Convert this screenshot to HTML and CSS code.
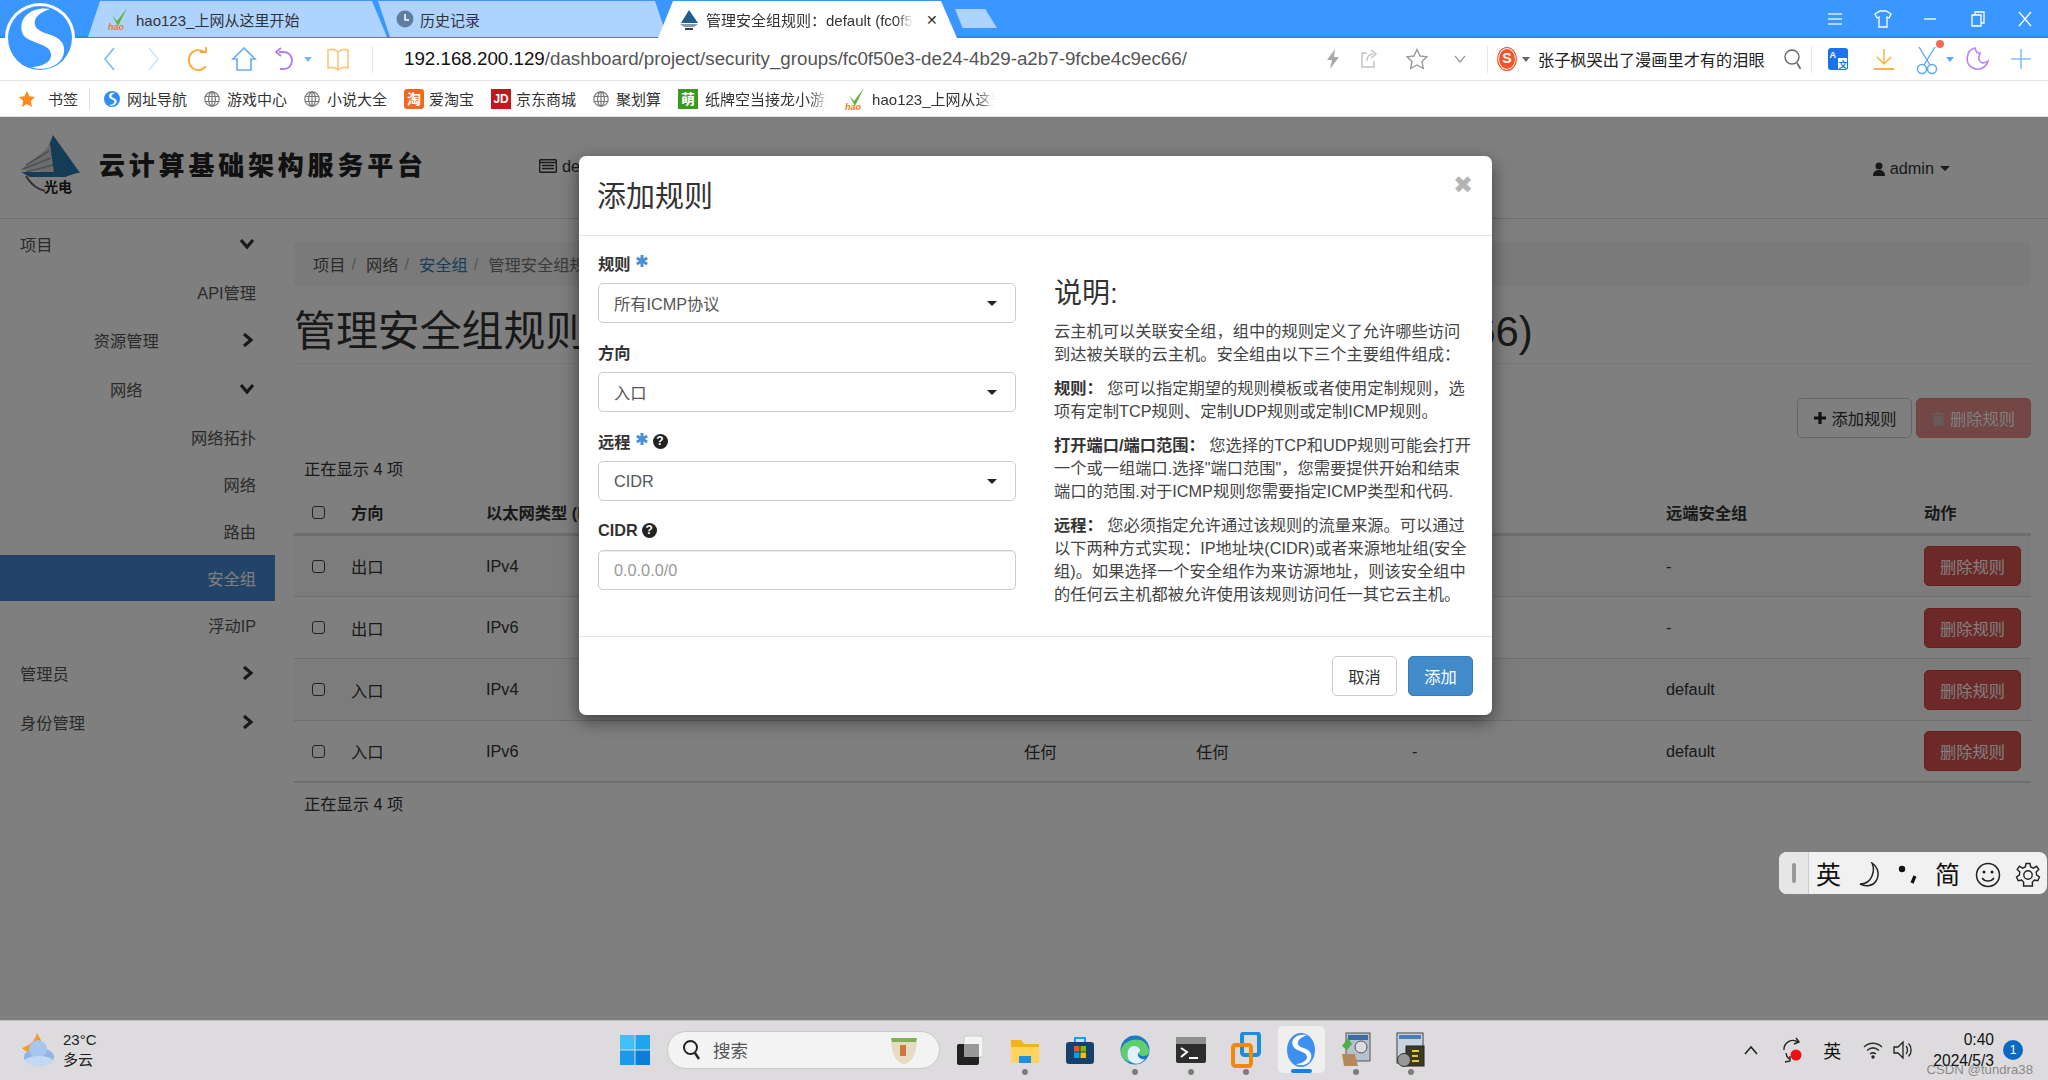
FILE: index.html
```html
<!DOCTYPE html>
<html lang="zh-CN">
<head>
<meta charset="utf-8">
<title>管理安全组规则</title>
<link rel="stylesheet" href="styles.css">
</head>
<body>
<svg class="brand" width="72" height="72" viewBox="0 0 72 72" aria-hidden="true">
  <circle cx="36" cy="36" r="35" fill="#fff"/>
  <circle cx="36" cy="36" r="32" fill="#3a96ff"/>
  <path d="M46 7 C30 4 14 14 18 30 C21 42 46 40 47 52 C48 60 38 65 27 65 C42 71 62 62 60 46 C58 30 34 34 31 23 C29 15 37 10 46 7 Z" fill="#fff"/>
</svg>

<header class="tabbar">
  <div class="tab tab-first">
    <svg class="tab-ic" width="22" height="24" viewBox="0 0 22 24"><path d="M4 8 L9 14 L19 1 L10 19 Z" fill="#5fb53a"/><text x="0" y="23" class="hao">hao</text></svg>
    <span class="tab-t">hao123_上网从这里开始</span>
  </div>
  <div class="tab tab-mid">
    <svg class="tab-ic" width="18" height="18" viewBox="0 0 18 18"><circle cx="9" cy="9" r="8.5" fill="#5f7d9f"/><path d="M9 4 V10 H13" stroke="#fff" stroke-width="1.5" fill="none"/></svg>
    <span class="tab-t">历史记录</span>
  </div>
  <div class="tab tab-active">
    <svg class="tab-ic" width="22" height="22" viewBox="0 0 22 22"><path d="M11 1 L20 14 H3 Z" fill="#1f5f8f"/><path d="M2 15 H20 L16 18 H6 Z" fill="#8a9aaa"/><path d="M7 20 H15" stroke="#345" stroke-width="2"/></svg>
    <span class="tab-t tab-fade">管理安全组规则：default (fc0f50e3-de24-4b29</span>
    <span class="tab-x">✕</span>
  </div>
  <div class="tab-new"></div>
  <div class="winctl">
    <span class="wc"><svg width="16" height="14" viewBox="0 0 16 14"><path d="M1 2 H15 M1 7 H15 M1 12 H15" stroke="#dcecff" stroke-width="1.4"/></svg></span>
    <span class="wc"><svg width="18" height="18" viewBox="0 0 18 18"><path d="M6 1 H12 L17 4 L15 8 L13 7 V17 H5 V7 L3 8 L1 4 Z" fill="none" stroke="#fff" stroke-width="1.3"/></svg></span>
    <span class="wc"><svg width="14" height="14" viewBox="0 0 14 14"><path d="M1 7 H13" stroke="#dcecff" stroke-width="1.6"/></svg></span>
    <span class="wc"><svg width="16" height="18" viewBox="0 0 16 18"><path d="M2 5 H11 V16 H2 Z M5 5 V2 H14 V13 H11" fill="none" stroke="#fff" stroke-width="1.3"/></svg></span>
    <span class="wc"><svg width="14" height="16" viewBox="0 0 14 16"><path d="M1 1 L13 15 M13 1 L1 15" stroke="#fff" stroke-width="1.3"/></svg></span>
  </div>
</header>

<nav class="toolbar">
  <span class="slot s45"><svg width="14" height="26" viewBox="0 0 14 26"><path d="M12 2 L3 13 L12 24" stroke="#79b7f6" fill="none" stroke-width="1.6"/></svg></span>
  <span class="slot s45"><svg width="14" height="26" viewBox="0 0 14 26"><path d="M2 2 L11 13 L2 24" stroke="#cfe5fb" fill="none" stroke-width="1.6"/></svg></span>
  <span class="slot s45"><svg width="24" height="26" viewBox="0 0 24 26"><path d="M18 7 A9.5 10 0 1 0 19 20" stroke="#ffa733" fill="none" stroke-width="1.8"/><path d="M13 6 H19 V1" stroke="#ffa733" fill="none" stroke-width="1.8"/></svg></span>
  <span class="slot s45"><svg width="26" height="26" viewBox="0 0 26 26"><path d="M13 2 L2 13 H6 V24 H20 V13 H24 Z" stroke="#68aff3" fill="none" stroke-width="1.7"/></svg></span>
  <span class="slot s38"><svg width="22" height="24" viewBox="0 0 22 24"><path d="M5 5 H10 A8 8.500 0 0 1 10 22 H6" stroke="#b27cf2" fill="none" stroke-width="1.8"/><path d="M7 1 L2 5 L7 9" stroke="#b27cf2" fill="none" stroke-width="1.8"/></svg></span>
  <span class="caret-xs"></span>
  <span class="slot s52"><svg width="24" height="24" viewBox="0 0 24 24"><path d="M12 5 C9 2 5 2 2 3 V21 C5 20 9 20 12 23 C15 20 19 20 22 21 V3 C19 2 15 2 12 5 Z M12 5 V23" stroke="#ffc477" fill="none" stroke-width="1.6"/></svg></span>
  <span class="tb-sep sep-left"></span>
  <div class="url"><b>192.168.200.129</b>/dashboard/project/security_groups/fc0f50e3-de24-4b29-a2b7-9fcbe4c9ec66/</div>
  <span class="slot s36"><svg width="14" height="22" viewBox="0 0 14 22"><path d="M9 1 L1 12 H6 L4 21 L13 9 H8 Z" fill="#a9a9a9"/></svg></span>
  <span class="slot s36"><svg width="18" height="20" viewBox="0 0 18 20"><path d="M7 4 H2 V18 H14 V12 M7 12 C7 7 10 5 13 5 M11 1 L16 5 L11 9" stroke="#c4c4c4" fill="none" stroke-width="1.5"/></svg></span>
  <span class="slot s60"><svg width="22" height="22" viewBox="0 0 22 22"><path d="M11 1.500 L14 8 L21 8.800 L16 13.500 L17.300 20.500 L11 17 L4.700 20.500 L6 13.500 L1 8.800 L8 8 Z" stroke="#9a9a9a" fill="none" stroke-width="1.4"/></svg></span>
  <span class="slot s26"><svg width="12" height="8" viewBox="0 0 12 8"><path d="M1 1 L6 7 L11 1" stroke="#999" fill="none" stroke-width="1.2"/></svg></span>
  <span class="tb-sep sep-mid"></span>
  <span class="so-badge">S</span>
  <span class="caret-xs gray"></span>
  <span class="news">张子枫哭出了漫画里才有的泪眼</span>
  <svg class="ml18" width="20" height="22" viewBox="0 0 20 22"><circle cx="9" cy="9" r="7" stroke="#666" fill="none" stroke-width="1.4"/><path d="M14 15 L17.500 21" stroke="#666" stroke-width="1.6"/></svg>
  <span class="tb-sep sep-tools"></span>
  <svg class="ml15" width="22" height="24" viewBox="0 0 22 24"><rect x="1" y="1" width="20" height="22" rx="3" fill="#1a73e8"/><rect x="11" y="11" width="9" height="11" fill="#fff"/><text x="2.500" y="11" class="tr-a">A</text><text x="11.500" y="20.500" class="tr-b">文</text></svg>
  <svg class="ml24" width="22" height="24" viewBox="0 0 22 24"><path d="M11 2 V16 M4 10 L11 17 L18 10" stroke="#ffb13d" fill="none" stroke-width="1.5"/><path d="M1 22 H21" stroke="#ffb13d" stroke-width="2"/></svg>
  <svg class="ml20 sciss" width="24" height="30" viewBox="0 0 24 30"><path d="M4 2 L15 20 M20 2 L9 20" stroke="#5ea9f5" fill="none" stroke-width="1.4"/><circle cx="7" cy="24" r="4.500" stroke="#5ea9f5" fill="none" stroke-width="1.5"/><circle cx="17" cy="24" r="4.500" stroke="#5ea9f5" fill="none" stroke-width="1.5"/></svg>
  <span class="reddot"></span>
  <span class="caret-xs blue"></span>
  <svg class="ml11" width="24" height="26" viewBox="0 0 24 26"><path d="M10 2 C1 4 -1 18 8 22 C14 25 21 22 23 15 C18 19 13 16 14 11 L15 7 C13 8 11 6 10 2 Z" stroke="#bb82f4" fill="none" stroke-width="1.6"/></svg>
  <svg class="ml21 mr16" width="22" height="22" viewBox="0 0 22 22"><path d="M11 1 V21 M1 11 H21" stroke="#86bdf6" stroke-width="1.6"/></svg>
</nav>

<nav class="bookmarks">
  <a class="bm bm-first"><svg width="16" height="16" viewBox="0 0 16 16"><path d="M8 0 L10.400 5.300 L16 6 L11.900 10 L13 16 L8 13 L3 16 L4.100 10 L0 6 L5.600 5.300 Z" fill="#ff8a1e"/></svg><span class="bm-t">书签</span></a>
  <span class="bm-sep"></span>
  <a class="bm"><svg width="16" height="18" viewBox="0 0 16 18"><circle cx="8" cy="9" r="8" fill="#2f8cf0"/><path d="M11 3 C6 2 4 5 5.500 7.500 C7 10 11 9.500 10.500 12 C10 14 7 15 5 15 C9 17 13.500 14 12.500 10.500 C11.500 7.500 8 8.500 7.500 6.500 C7.300 5 9 4 11 3 Z" fill="#fff"/></svg><span class="bm-t">网址导航</span></a>
  <a class="bm"><svg class="globe" width="16" height="16" viewBox="0 0 16 16"><circle cx="8" cy="8" r="7.200"/><ellipse cx="8" cy="8" rx="3.400" ry="7.200"/><path d="M8 .8 V15.200 M.8 5.500 H15.200 M.8 10.500 H15.200"/></svg><span class="bm-t">游戏中心</span></a>
  <a class="bm"><svg class="globe" width="16" height="16" viewBox="0 0 16 16"><circle cx="8" cy="8" r="7.200"/><ellipse cx="8" cy="8" rx="3.400" ry="7.200"/><path d="M8 .8 V15.200 M.8 5.500 H15.200 M.8 10.500 H15.200"/></svg><span class="bm-t">小说大全</span></a>
  <a class="bm bm-fav"><span class="fav fav-tao">淘</span><span class="bm-t">爱淘宝</span></a>
  <a class="bm bm-fav"><span class="fav fav-jd">JD</span><span class="bm-t">京东商城</span></a>
  <a class="bm"><svg class="globe" width="16" height="16" viewBox="0 0 16 16"><circle cx="8" cy="8" r="7.200"/><ellipse cx="8" cy="8" rx="3.400" ry="7.200"/><path d="M8 .8 V15.200 M.8 5.500 H15.200 M.8 10.500 H15.200"/></svg><span class="bm-t">聚划算</span></a>
  <a class="bm bm-game"><span class="fav fav-game">萌</span><span class="bm-t bm-fade">纸牌空当接龙小游戏</span></a>
  <a class="bm"><svg width="22" height="24" viewBox="0 0 22 24"><path d="M4 8 L9 14 L19 1 L10 19 Z" fill="#5fb53a"/><text x="0" y="23" class="hao">hao</text></svg><span class="bm-t bm-fade bm-hao">hao123_上网从这里开始</span></a>
</nav>

<main class="page">
  <div class="topbar">
    <svg class="site-logo" width="70" height="62" viewBox="0 0 70 62">
      <path d="M35 1 L62 39 L36 39 L26 24 Z" fill="#2a78ad"/>
      <path d="M2 36 C14 26 24 20 32 10 L36 39 Z" fill="#d8d8d8"/>
      <path d="M8 31 L31 17 M5 35 L33 24 M8 38 L35 31" stroke="#a0a0a0" stroke-width="1.500"/>
      <path d="M3 38 H62 L47 43 H12 Z" fill="#2a78ad"/>
      <path d="M8 42 C14 52 20 55 27 57" stroke="#666" fill="none" stroke-width="2"/>
      <text x="26" y="58" class="logo-sub">光电</text>
    </svg>
    <div class="site-name">云计算基础架构服务平台</div>
    <div class="project-pick">
      <svg width="18" height="14" viewBox="0 0 18 14"><rect x=".7" y=".7" width="16.600" height="12.600" rx="1" fill="none" stroke="#333" stroke-width="1.400"/><path d="M1 3.500 H17 M3 6.500 H15 M3 9.500 H15" stroke="#333" stroke-width="1.300"/></svg>
      <span>default</span>
    </div>
    <div class="user-pick">
      <svg width="12" height="14" viewBox="0 0 12 14"><circle cx="6" cy="4" r="3.500" fill="#333"/><path d="M0 14 C0 9 3 8 6 8 C9 8 12 9 12 14 Z" fill="#333"/></svg>
      <span>admin</span><i class="caret"></i>
    </div>
  </div>

  <div class="layout">
    <aside class="sidebar">
      <div class="side-row side-top"><span class="side-t side-l">项目</span><svg class="chev" width="16" height="12" viewBox="0 0 16 12"><path d="M2 2 L8 9 L14 2" /></svg></div>
      <div class="side-row side-leaf">API管理</div>
      <div class="side-row side-top"><span class="side-t">资源管理</span><svg class="chev" width="16" height="16" viewBox="0 0 16 16"><path d="M5 2 L12 8 L5 14"/></svg></div>
      <div class="side-row side-top"><span class="side-t">网络</span><svg class="chev" width="16" height="12" viewBox="0 0 16 12"><path d="M2 2 L8 9 L14 2"/></svg></div>
      <div class="side-row side-leaf">网络拓扑</div>
      <div class="side-row side-leaf">网络</div>
      <div class="side-row side-leaf">路由</div>
      <div class="side-row side-leaf side-active">安全组</div>
      <div class="side-row side-leaf">浮动IP</div>
      <div class="side-row side-top"><span class="side-t side-l">管理员</span><svg class="chev" width="16" height="16" viewBox="0 0 16 16"><path d="M5 2 L12 8 L5 14"/></svg></div>
      <div class="side-row side-top"><span class="side-t side-l">身份管理</span><svg class="chev" width="16" height="16" viewBox="0 0 16 16"><path d="M5 2 L12 8 L5 14"/></svg></div>
    </aside>

    <section class="content">
      <ol class="crumbs">
        <li>项目</li><li class="crumb-sep">/</li>
        <li>网络</li><li class="crumb-sep">/</li>
        <li class="crumb-link">安全组</li><li class="crumb-sep">/</li>
        <li class="crumb-cur">管理安全组规则</li>
      </ol>
      <div class="page-head"><h1>管理安全组规则: default (fc0f50e3-de24-4b29-a2b7-9fcbe4c9ec66)</h1></div>
      <div class="actions">
        <button class="btn btn-default"><svg width="14" height="14" viewBox="0 0 14 14"><path d="M7 1 V13 M1 7 H13" stroke="#222" stroke-width="3.200"/></svg>添加规则</button>
        <button class="btn btn-danger btn-off"><svg width="13" height="15" viewBox="0 0 13 15"><path d="M4.500 1 H8.500 V2.500 H13 V4 H0 V2.500 H4.500 Z M1 5 H12 L11 15 H2 Z" fill="#b98f8f"/></svg>删除规则</button>
      </div>
      <div class="count">正在显示 4 项</div>
      <table class="rules">
        <colgroup><col class="c-chk"><col class="c-dir"><col class="c-eth"><col class="c-ip"><col class="c-port"><col class="c-pre"><col class="c-grp"><col class="c-act"></colgroup>
        <thead><tr>
          <th><i class="chk"></i></th><th>方向</th><th>以太网类型 (EtherType)</th><th>IP协议</th><th>端口范围</th><th>远端IP前缀</th><th>远端安全组</th><th>动作</th>
        </tr></thead>
        <tbody>
          <tr><td><i class="chk"></i></td><td>出口</td><td>IPv4</td><td>任何</td><td>任何</td><td>0.0.0.0/0</td><td>-</td><td><button class="btn btn-danger">删除规则</button></td></tr>
          <tr><td><i class="chk"></i></td><td>出口</td><td>IPv6</td><td>任何</td><td>任何</td><td>::/0</td><td>-</td><td><button class="btn btn-danger">删除规则</button></td></tr>
          <tr><td><i class="chk"></i></td><td>入口</td><td>IPv4</td><td>任何</td><td>任何</td><td>-</td><td>default</td><td><button class="btn btn-danger">删除规则</button></td></tr>
          <tr><td><i class="chk"></i></td><td>入口</td><td>IPv6</td><td>任何</td><td>任何</td><td>-</td><td>default</td><td><button class="btn btn-danger">删除规则</button></td></tr>
        </tbody>
      </table>
      <div class="count count-foot">正在显示 4 项</div>
    </section>
  </div>

  <div class="backdrop"></div>

  <div class="modal">
    <div class="modal-head"><h2>添加规则</h2><span class="close">✖</span></div>
    <div class="modal-body">
      <form class="form">
        <div class="group">
          <label>规则 <svg class="req" width="14" height="14" viewBox="0 0 14 14"><path d="M7 1 V13 M1.800 4 L12.200 10 M12.200 4 L1.800 10" stroke="#4a90d9" stroke-width="3"/></svg></label>
          <div class="control"><span>所有ICMP协议</span><i class="caret"></i></div>
        </div>
        <div class="group">
          <label>方向</label>
          <div class="control"><span>入口</span><i class="caret"></i></div>
        </div>
        <div class="group">
          <label>远程 <svg class="req" width="14" height="14" viewBox="0 0 14 14"><path d="M7 1 V13 M1.800 4 L12.200 10 M12.200 4 L1.800 10" stroke="#4a90d9" stroke-width="3"/></svg><span class="q">?</span></label>
          <div class="control"><span>CIDR</span><i class="caret"></i></div>
        </div>
        <div class="group">
          <label>CIDR <span class="q">?</span></label>
          <div class="control control-input"><span>0.0.0.0/0</span></div>
        </div>
      </form>
      <div class="help">
        <h3>说明:</h3>
        <p>云主机可以关联安全组，组中的规则定义了允许哪些访问到达被关联的云主机。安全组由以下三个主要组件组成：</p>
        <p><strong>规则：</strong> 您可以指定期望的规则模板或者使用定制规则，选项有定制TCP规则、定制UDP规则或定制ICMP规则。</p>
        <p><strong>打开端口/端口范围：</strong> 您选择的TCP和UDP规则可能会打开一个或一组端口.选择"端口范围"，您需要提供开始和结束端口的范围.对于ICMP规则您需要指定ICMP类型和代码.</p>
        <p><strong>远程：</strong> 您必须指定允许通过该规则的流量来源。可以通过以下两种方式实现：IP地址块(CIDR)或者来源地址组(安全组)。如果选择一个安全组作为来访源地址，则该安全组中的任何云主机都被允许使用该规则访问任一其它云主机。</p>
      </div>
    </div>
    <div class="modal-foot">
      <button class="btn btn-cancel">取消</button>
      <button class="btn btn-primary">添加</button>
    </div>
  </div>
</main>

<aside class="ime">
  <span class="ime-grip"><i></i></span>
  <span class="ime-t">英</span>
  <svg class="ime-moon" width="26" height="26" viewBox="0 0 26 26"><path d="M14 1 C20 5 22 13 18 19 C15 24 8 25 2 22 C8 22 12 19 14 14 C16 9 16 5 14 1 Z" fill="none" stroke="#222" stroke-width="1.500"/></svg>
  <svg class="ime-punc" width="24" height="26" viewBox="0 0 24 26"><circle cx="6" cy="7" r="3.200" fill="#111"/><path d="M19 14 L16 21" stroke="#111" stroke-width="3.200"/></svg>
  <span class="ime-t ime-jian">简</span>
  <svg class="ime-face" width="26" height="26" viewBox="0 0 26 26"><circle cx="13" cy="13" r="11.500" fill="none" stroke="#222" stroke-width="1.500"/><circle cx="9" cy="10" r="1.500" fill="#222"/><circle cx="17" cy="10" r="1.500" fill="#222"/><path d="M7 16 C10 20 16 20 19 16" fill="none" stroke="#222" stroke-width="1.500"/></svg>
  <svg class="ime-gear" width="26" height="26" viewBox="0 0 26 26"><path d="M11 1.500 H15 L15.700 5 L18.500 6.200 L21.500 4.200 L23.800 7.500 L21.200 10 L21.700 13 L24.500 15 L22.800 18.700 L19.400 18 L17.300 20.300 L17.500 24 H13 H8.500 L8.700 20.300 L6.600 18 L3.200 18.700 L1.500 15 L4.300 13 L4.800 10 L2.200 7.500 L4.500 4.200 L7.500 6.200 L10.300 5 Z" fill="none" stroke="#222" stroke-width="1.400"/><circle cx="13" cy="13" r="4.200" fill="none" stroke="#222" stroke-width="1.400"/></svg>
</aside>

<footer class="taskbar">
  <div class="weather">
    <svg width="34" height="36" viewBox="0 0 34 36"><path d="M15 1 C18 7 21 10 21 15 L10 22 C5 20 2 18 0 16 C6 14 13 10 15 1 Z" fill="#f59b1d"/><ellipse cx="17" cy="25" rx="15" ry="9" fill="#8db5e6"/><circle cx="16" cy="17" r="9" fill="#a5c6ee"/><ellipse cx="17" cy="29" rx="14" ry="5" fill="#c2d8f3"/></svg>
    <div class="weather-t"><span>23°C</span><span>多云</span></div>
  </div>
  <div class="start">
    <svg width="30" height="30" viewBox="0 0 30 30"><rect width="14.500" height="14.500" fill="#3fc1f7"/><rect x="15.500" width="14.500" height="14.500" fill="#1ea5ee"/><rect y="15.500" width="14.500" height="14.500" fill="#1a9ae8"/><rect x="15.500" y="15.500" width="14.500" height="14.500" fill="#0a7fd9"/></svg>
  </div>
  <div class="search">
    <svg width="20" height="22" viewBox="0 0 20 22"><circle cx="8.500" cy="8.500" r="6.500" fill="none" stroke="#222" stroke-width="2"/><path d="M13 14 L17 20" stroke="#222" stroke-width="2.400"/></svg>
    <span>搜索</span>
    <svg class="cup" width="30" height="30" viewBox="0 0 30 30"><path d="M2 3 H28 C28 16 24 28 15 29 C6 28 2 16 2 3 Z" fill="#e6dcc0"/><path d="M2 3 H28 L27 7 H3 Z" fill="#7fb05a"/><rect x="11" y="10" width="6" height="11" fill="#d0763a"/></svg>
  </div>
  <div class="apps">
    <span class="app"><svg width="26" height="30" viewBox="0 0 26 30"><rect x="7" y="1" width="19" height="21" rx="2" fill="#f4f4f4" stroke="#ccc"/><rect y="9" width="22" height="21" rx="2" fill="#222"/><rect x="7" y="9" width="15" height="13" fill="#999"/></svg></span>
    <span class="app app-dot"><svg width="30" height="28" viewBox="0 0 30 28"><path d="M1 4 H11 L14 8 H29 V27 H1 Z" fill="#f3b41b"/><rect x="1" y="11" width="28" height="16" fill="#ffd45c"/><rect x="9" y="20" width="12" height="7" fill="#1f8fe0"/></svg></span>
    <span class="app"><svg width="30" height="30" viewBox="0 0 30 30"><path d="M10 7 V3 H20 V7" fill="none" stroke="#1a9ae8" stroke-width="2"/><rect x="1" y="7" width="28" height="22" rx="3" fill="#17406d"/><rect x="9" y="11" width="5.500" height="5.500" fill="#f25022"/><rect x="15.500" y="11" width="5.500" height="5.500" fill="#7fba00"/><rect x="9" y="17.500" width="5.500" height="5.500" fill="#00a4ef"/><rect x="15.500" y="17.500" width="5.500" height="5.500" fill="#ffb900"/></svg></span>
    <span class="app app-dot"><svg width="30" height="30" viewBox="0 0 30 30"><circle cx="15" cy="15" r="14.500" fill="#1c76c9"/><path d="M1 15 C3 4 25 -2 29 15 C30 22 20 23 18 18 C22 16 20 11 14 11 C7 11 5 22 11 27 C6 27 0 22 1 15 Z" fill="#5fcf6e"/><path d="M11 27 C5 22 7 11 14 11 C20 11 22 16 18 18 C17 23 22 25 25 24 C21 29 15 30 11 27 Z" fill="#dff3ff"/></svg></span>
    <span class="app app-dot"><svg width="30" height="26" viewBox="0 0 30 26"><rect width="30" height="26" rx="2" fill="#2d2d2d"/><rect width="30" height="7" fill="#8f8f8f"/><path d="M5 11 L11 15 L5 20" fill="none" stroke="#fff" stroke-width="2"/><path d="M13 21 H22" stroke="#fff" stroke-width="2"/></svg></span>
    <span class="app app-dot"><svg width="30" height="36" viewBox="0 0 30 36"><rect x="11" y="1" width="17" height="22" rx="2.500" fill="none" stroke="#1c8dd8" stroke-width="4"/><rect x="2" y="13" width="18" height="21" rx="2.500" fill="none" stroke="#f08a0c" stroke-width="4"/></svg></span>
    <span class="app app-on"><svg width="28" height="34" viewBox="0 0 28 34"><ellipse cx="14" cy="17" rx="14" ry="17" fill="#3d8ff0"/><path d="M20 2 C9 0 3 7 6 13 C9 19 20 18 20 24 C20 28 14 31 9 31 C17 35 26 29 24 21 C22 14 12 16 11 11 C10 7 15 4 20 2 Z" fill="#fff"/></svg></span>
    <span class="app app-dot"><svg width="30" height="36" viewBox="0 0 30 36"><rect x="5" y="1" width="24" height="28" fill="#b8c2cf" stroke="#555"/><rect x="7" y="3" width="20" height="5" fill="#3a6ea5"/><circle cx="20" cy="15" r="6" fill="#ddd" stroke="#555"/><path d="M1 14 L7 6 L11 12 L6 18 Z" fill="#4cb043"/><path d="M1 22 H14 L17 34 H3 Z" fill="#b58a5a"/></svg></span>
    <span class="app app-dot"><svg width="30" height="36" viewBox="0 0 30 36"><rect x="1" y="1" width="26" height="30" fill="#c9d3e0" stroke="#444"/><rect x="3" y="3" width="22" height="4" fill="#4a7fb5"/><rect x="10" y="14" width="18" height="20" fill="#3c3a22" stroke="#222"/><path d="M16 19 H23 M16 24 H22 M16 29 H23" stroke="#e6c933" stroke-width="2"/><circle cx="8" cy="28" r="6.500" fill="#999" stroke="#333"/></svg></span>
  </div>
  <div class="tray">
    <svg class="t-up" width="14" height="10" viewBox="0 0 14 10"><path d="M1 9 L7 2 L13 9" fill="none" stroke="#222" stroke-width="1.500"/></svg>
    <svg class="t-sync" width="22" height="26" viewBox="0 0 22 26"><path d="M2 13 A9 9 0 0 1 16 5 M14 1 L17 5 L12 7 M4 16 A9 9 0 0 0 7 22 M3 25 L8 24 L8 19" fill="none" stroke="#222" stroke-width="1.400"/><circle cx="14" cy="18" r="5.500" fill="#ee1111"/></svg>
    <span class="t-lang">英</span>
    <svg class="t-wifi" width="20" height="18" viewBox="0 0 20 18"><path d="M1 6 C6 1 14 1 19 6 M4 9.500 C8 6 12 6 16 9.500 M7 13 C9 11.500 11 11.500 13 13" fill="none" stroke="#333" stroke-width="1.500"/><circle cx="10" cy="16" r="1.700" fill="#222"/></svg>
    <svg class="t-vol" width="22" height="22" viewBox="0 0 22 22"><path d="M1 8 H5 L10 3 V19 L5 14 H1 Z M13 7 C15 9 15 13 13 15 M15.500 4.500 C19 8 19 14 15.500 17.500" fill="none" stroke="#222" stroke-width="1.300"/></svg>
    <div class="clock"><span>0:40</span><span>2024/5/3</span></div>
    <span class="badge">1</span>
  </div>
  <span class="mark">CSDN @tundra38</span>
</footer>
</body>
</html>
```
FILE: styles.css
```css
* { box-sizing: border-box; }
html, body { margin: 0; height: 100%; overflow: hidden; }
body {
  position: relative;
  width: 2048px;
  height: 1080px;
  display: flex;
  flex-direction: column;
  background: #fff;
  color: #333;
  font-family: "Liberation Sans", "Noto Sans CJK SC", sans-serif;
  font-size: 16.25px;
}
svg { display: block; flex: none; }
.brand { position: absolute; left: 4px; top: 2px; z-index: 5; }

/* tab strip */
.tabbar {
  height: 38px; flex: none;
  display: flex; padding-left: 88px; padding-top: 1px;
  background: #3997ff; border-bottom: 2px solid #2f88ea;
  color: #333; font-size: 15px;
}
.tab { height: 36px; display: flex; align-items: center; gap: 6px; background: #aed3ff; }
.tab-first { width: 299px; padding-left: 20px; clip-path: polygon(12px 0, calc(100% - 15px) 0, 100% 100%, 0 100%); }
.tab-mid { width: 289px; margin-left: -9px; padding-left: 18px; clip-path: polygon(0 0, calc(100% - 12px) 0, 100% 100%, 12px 100%); }
.tab-active { width: 299px; margin-left: -9px; padding-left: 20px; background: #fff; height: 37px; clip-path: polygon(15px 0, calc(100% - 16px) 0, 100% 100%, 0 100%); }
.tab-t { white-space: nowrap; }
.tab-fade { width: 207px; overflow: hidden; -webkit-mask-image: linear-gradient(90deg, #000 92%, transparent); mask-image: linear-gradient(90deg, #000 92%, transparent); }
.tab-x { font-size: 14px; margin-left: 7px; }
.tab-new { width: 42px; height: 19px; margin: 8px 0 0 -2px; background: #aed3ff; clip-path: polygon(0 0, 72% 0, 100% 100%, 18% 100%); }
.hao { font: italic 700 9px "Liberation Sans", sans-serif; fill: #f07a1a; }
.winctl { margin-left: auto; margin-right: -1px; display: flex; align-items: center; height: 36px; }
.wc { width: 47.500px; display: flex; justify-content: center; }

/* toolbar */
.toolbar { height: 43px; flex: none; display: flex; align-items: center; padding-left: 86px; border-bottom: 1px solid #e5e5e5; background: #fff; position: relative; }
.slot { display: flex; justify-content: center; align-items: center; flex: none; }
.s45 { width: 45px; } .s38 { width: 38px; } .s52 { width: 52px; } .s36 { width: 36px; } .s60 { width: 60px; } .s26 { width: 26px; }
.caret-xs { width: 0; height: 0; flex: none; border: 4px solid transparent; border-top: 5px solid #7db6f3; border-bottom: 0; }
.caret-xs.gray { border-top-color: #666; margin-left: 5px; }
.caret-xs.blue { border-top-color: #5ea9f5; margin-left: 7px; }
.tb-sep { width: 1px; height: 27px; background: #e4e4e4; flex: none; }
.sep-left { margin-left: 8px; }
.sep-mid { margin: 0 9px 0 14px; }
.sep-tools { margin-left: 8px; }
.url { flex: 1; margin-left: 31px; font-size: 18.750px; color: #555; white-space: nowrap; }
.url b { font-weight: 400; color: #111; }
.so-badge { width: 20px; height: 24px; flex: none; border-radius: 50%; background: #f2552c; border: 1.500px solid #f2552c; box-shadow: inset 0 0 0 1px #fff; color: #fff; font-weight: 700; font-size: 14px; line-height: 21px; text-align: center; }
.news { margin-left: 8px; width: 227px; white-space: nowrap; font-size: 16.2px; color: #222; }
.ml11 { margin-left: 11px; } .ml15 { margin-left: 15px; } .ml18 { margin-left: 18px; } .ml20 { margin-left: 20px; } .ml21 { margin-left: 21px; } .ml24 { margin-left: 24px; } .mr16 { margin-right: 16px; }
.tr-a { font: 700 9px "Liberation Sans", sans-serif; fill: #fff; }
.tr-b { font: 700 9px "Noto Sans CJK SC", sans-serif; fill: #1a73e8; }
.sciss { margin-top: 2px; }
.reddot { position: absolute; left: 1936px; top: 2px; width: 8px; height: 8px; border-radius: 50%; background: #f26a5a; }

/* bookmarks */
.bookmarks { height: 36px; flex: none; display: flex; align-items: center; gap: 17px; padding-left: 19px; border-bottom: 1px solid #e3e3e3; font-size: 15px; color: #333; }
.bm { display: flex; align-items: center; gap: 7px; white-space: nowrap; }
.bm-first { gap: 13px; }
.bm-fav, .bm-game { gap: 5px; }
.bm-sep { width: 1px; height: 22px; background: #ddd; margin: 0 -3px 0 -6px; }
.globe { fill: none; stroke: #777; stroke-width: 1.2; }
.fav { width: 20px; height: 20px; flex: none; display: block; color: #fff; text-align: center; font-size: 14px; line-height: 20px; font-weight: 700; }
.fav-tao { background: #f2661f; border-radius: 3px; }
.fav-jd { background: #c4161c; font-size: 12px; }
.fav-game { background: #3b9a1e; margin-right: 2px; }
.bm-fade { display: block; width: 123px; overflow: hidden; -webkit-mask-image: linear-gradient(90deg, #000 85%, transparent); mask-image: linear-gradient(90deg, #000 85%, transparent); }
.bm-hao { margin-left: -2px; }

/* page */
.page { flex: 1; position: relative; overflow: hidden; display: flex; flex-direction: column; background: #fff; min-height: 0; }
.topbar { height: 102px; flex: none; display: flex; align-items: center; border-bottom: 1px solid #d8d8d8; position: relative; padding-bottom: 3px; }
.site-logo { margin-left: 18px; margin-top: -2px; }
.logo-sub { font: 700 14px "Noto Sans CJK SC", sans-serif; fill: #222; }
.site-name { margin-left: 11px; font-size: 26px; font-weight: 900; letter-spacing: 3.800px; color: #222; white-space: nowrap; margin-top: -5px; width: 420px; }
.project-pick { display: flex; align-items: center; gap: 5px; margin-left: 20px; }
.user-pick { margin-left: auto; margin-right: 98px; margin-top: 5px; display: flex; align-items: center; gap: 5px; }
.caret { width: 0; height: 0; display: inline-block; border: 5px solid transparent; border-top: 5px solid #333; border-bottom: 0; }
.user-pick .caret { margin-left: 1px; }

.layout { flex: 1; display: flex; min-height: 0; }
.sidebar { width: 275px; flex: none; color: #555; }
.side-row { display: flex; align-items: center; padding: 0 19px 0 20px; }
.side-top { height: 49px; }
.side-leaf { height: 47px; justify-content: flex-end; }
.side-active { background: #4289d0; color: #fff; height: 46px; margin-top: 1px; }
.side-t { flex: 1; text-align: center; padding-right: 6px; }
.side-l { text-align: left; }
.chev { fill: none; stroke: #333; stroke-width: 3.200; margin-left: auto; margin-right: 1.500px; }

.content { flex: 1; padding: 23px 17px 0 19px; min-width: 0; }
.crumbs { list-style: none; margin: 0; height: 44px; background: #f5f5f5; border-radius: 5px; display: flex; align-items: center; padding: 0 19px; gap: 6px; color: #555; white-space: nowrap; overflow: hidden; }
.crumb-sep { color: #aaa; margin-right: 4px; }
.crumb-link { color: #337ab7; }
.crumb-cur { color: #777; }
.page-head { height: 78px; border-bottom: 1px solid #eee; display: flex; align-items: center; padding-top: 15px; }
h1 { margin: 0; font-size: 41.900px; font-weight: 400; white-space: nowrap; color: #333; line-height: 1; }
.actions { margin-top: 34px; height: 40px; display: flex; justify-content: flex-end; gap: 4px; }
.btn { height: 40px; display: inline-flex; align-items: center; justify-content: center; gap: 5px; padding: 0 16px; border: 1px solid #ccc; border-radius: 5px; background: #fff; color: #333; font: inherit; }
.btn-danger { background: #d9534f; border-color: #d43f3a; color: #fff; }
.btn-off { opacity: .65; }
.actions .btn { width: 115px; padding: 0; }
.count { height: 24px; line-height: 24px; margin-top: 19px; padding-left: 10px; }
.count-foot { margin-top: 9px; }
.rules { width: 100%; border-collapse: collapse; table-layout: fixed; margin-top: 1px; }
.c-chk { width: 47px; } .c-dir { width: 135px; } .c-eth { width: 538px; } .c-ip { width: 172px; } .c-port { width: 216px; } .c-pre { width: 254px; } .c-grp { width: 258px; } .c-act { width: 117px; }
.rules th { height: 52px; padding: 10px 10px 0; text-align: left; font-weight: 700; border-bottom: 3px solid #ddd; white-space: nowrap; overflow: hidden; }
.rules td { height: 62px; padding: 1px 10px 0; border-bottom: 1px solid #ddd; white-space: nowrap; }
.rules tbody tr:nth-child(odd) td { background: #f9f9f9; }
.rules tbody tr:last-child td { border-bottom: 2px solid #ddd; }
.chk { display: block; width: 13px; height: 13px; margin-left: 8px; border: 1.500px solid #444; border-radius: 3px; background: #fff; }
.rules .btn { width: 97px; padding: 0; }

.backdrop { position: absolute; inset: 0; background: rgba(0,0,0,.5); }

/* modal */
.modal { position: absolute; left: 579px; top: 39px; width: 913px; height: 559px; display: flex; flex-direction: column; background: #fff; border-radius: 7px; box-shadow: 0 6px 18px rgba(0,0,0,.5); }
.modal-head { height: 80px; flex: none; display: flex; align-items: center; justify-content: space-between; padding: 0 19px 3px 18px; border-bottom: 1px solid #e5e5e5; }
h2 { margin: 0; font-size: 29px; font-weight: 400; color: #333; }
.close { font-size: 24px; color: #b5b5b5; font-weight: 700; margin-top: -18px; font-family: "DejaVu Sans", sans-serif; }
.modal-body { flex: 1; display: flex; padding: 15px 19px 0 19px; gap: 38px; }
.form { width: 418px; flex: none; }
.group { margin-bottom: 17px; }
.group label { display: flex; align-items: center; height: 24px; margin-bottom: 8px; font-weight: 700; gap: 4px; }
.req { margin: -5px 0 0 0; }
.q { width: 15px; height: 15px; border-radius: 50%; background: #222; color: #fff; font-size: 12px; line-height: 15px; text-align: center; font-weight: 700; margin-left: 0; }
.control { height: 40px; display: flex; align-items: center; justify-content: space-between; padding: 0 18px 0 15px; border: 1px solid #ccc; border-radius: 5px; color: #555; background: #fff; }
.control .caret { border-top-color: #222; margin-right: 0; border-width: 5px 5px 0; }
.control-input { color: #999; box-shadow: inset 0 1px 1px rgba(0,0,0,.075); }
.help { flex: 1; min-width: 0; padding-top: 27px; width: 422px; }
h3 { margin: 0 0 10px; font-size: 28px; font-weight: 400; color: #333; line-height: 32px; }
.help p { margin: 0 0 11px; line-height: 23px; color: #444; }
.help strong { color: #333; }
.modal-foot { height: 79px; flex: none; border-top: 1px solid #e5e5e5; display: flex; justify-content: flex-end; align-items: center; gap: 11px; padding-right: 19px; }
.modal-foot .btn { width: 65px; padding: 0; }
.btn-primary { background: #428bca; border-color: #357ebd; color: #fff; }

/* ime bar */
.ime { position: absolute; right: 1px; top: 852px; width: 268px; height: 42px; display: flex; align-items: center; background: #f1f1f1; border-radius: 8px; color: #111; z-index: 6; }
.ime-grip { width: 30px; height: 42px; display: flex; align-items: center; justify-content: center; border-right: 1px solid #ccc; background: #e6e6e6; border-radius: 8px 0 0 8px; }
.ime-grip i { width: 4px; height: 20px; background: #999; border-radius: 2px; }
.ime-t { font-size: 25px; line-height: 42px; margin: 3px 0 0 7px; }
.ime-moon { margin: 3px 0 0 17px; }
.ime-punc { margin: 3px 0 0 12px; }
.ime-jian { margin-left: 15px; }
.ime-face { margin: 3px 0 0 15px; }
.ime-gear { margin: 3px 0 0 14px; }

/* taskbar */
.taskbar { height: 60px; flex: none; position: relative; display: flex; align-items: center; background: #dddbdd; border-top: 1px solid #bdbdbd; padding-bottom: 2px; }
.weather { width: 620px; flex: none; display: flex; align-items: center; gap: 7px; padding-left: 22px; }
.weather-t { display: flex; flex-direction: column; font-size: 15px; line-height: 20px; color: #222; }
.start { width: 47px; flex: none; }
.search { width: 273px; height: 38px; flex: none; display: flex; align-items: center; background: #f3f3f3; border: 1px solid #c8c8c8; border-radius: 19px; padding-left: 14px; color: #555; font-size: 17.500px; gap: 11px; }
.cup { margin-left: auto; margin-right: 20px; }
.apps { display: flex; margin-left: 2px; }
.app { width: 55.250px; height: 47px; display: flex; align-items: center; justify-content: center; position: relative; }
.app-dot::after { content: ""; position: absolute; left: 50%; bottom: -2px; width: 6px; height: 6px; margin-left: -3px; border-radius: 50%; background: #7c7c7c; }
.app-on { background: #efefef; border-radius: 5px; width: 47px; margin: 0 4px; }
.app-on::after { content: ""; position: absolute; left: 13px; bottom: 0; width: 21px; height: 4px; border-radius: 2px; background: #1a7fe0; }
.tray { margin-left: auto; display: flex; align-items: center; padding-right: 25px; position: relative; }
.t-up { margin-right: 24px; }
.t-sync { margin-right: 19px; }
.t-lang { font-size: 18px; margin-right: 22px; color: #111; }
.t-wifi { margin-right: 10px; }
.t-vol { margin-right: 18px; }
.clock { display: flex; flex-direction: column; align-items: flex-end; font-size: 15.600px; line-height: 21px; color: #111; margin-right: 9px; }
.badge { width: 20px; height: 20px; border-radius: 50%; background: #0b69c4; color: #fff; font-size: 12px; line-height: 20px; text-align: center; }
.mark { position: absolute; right: 15px; bottom: 3px; font-size: 13.200px; color: rgba(60,60,60,.55); white-space: nowrap; }
```
